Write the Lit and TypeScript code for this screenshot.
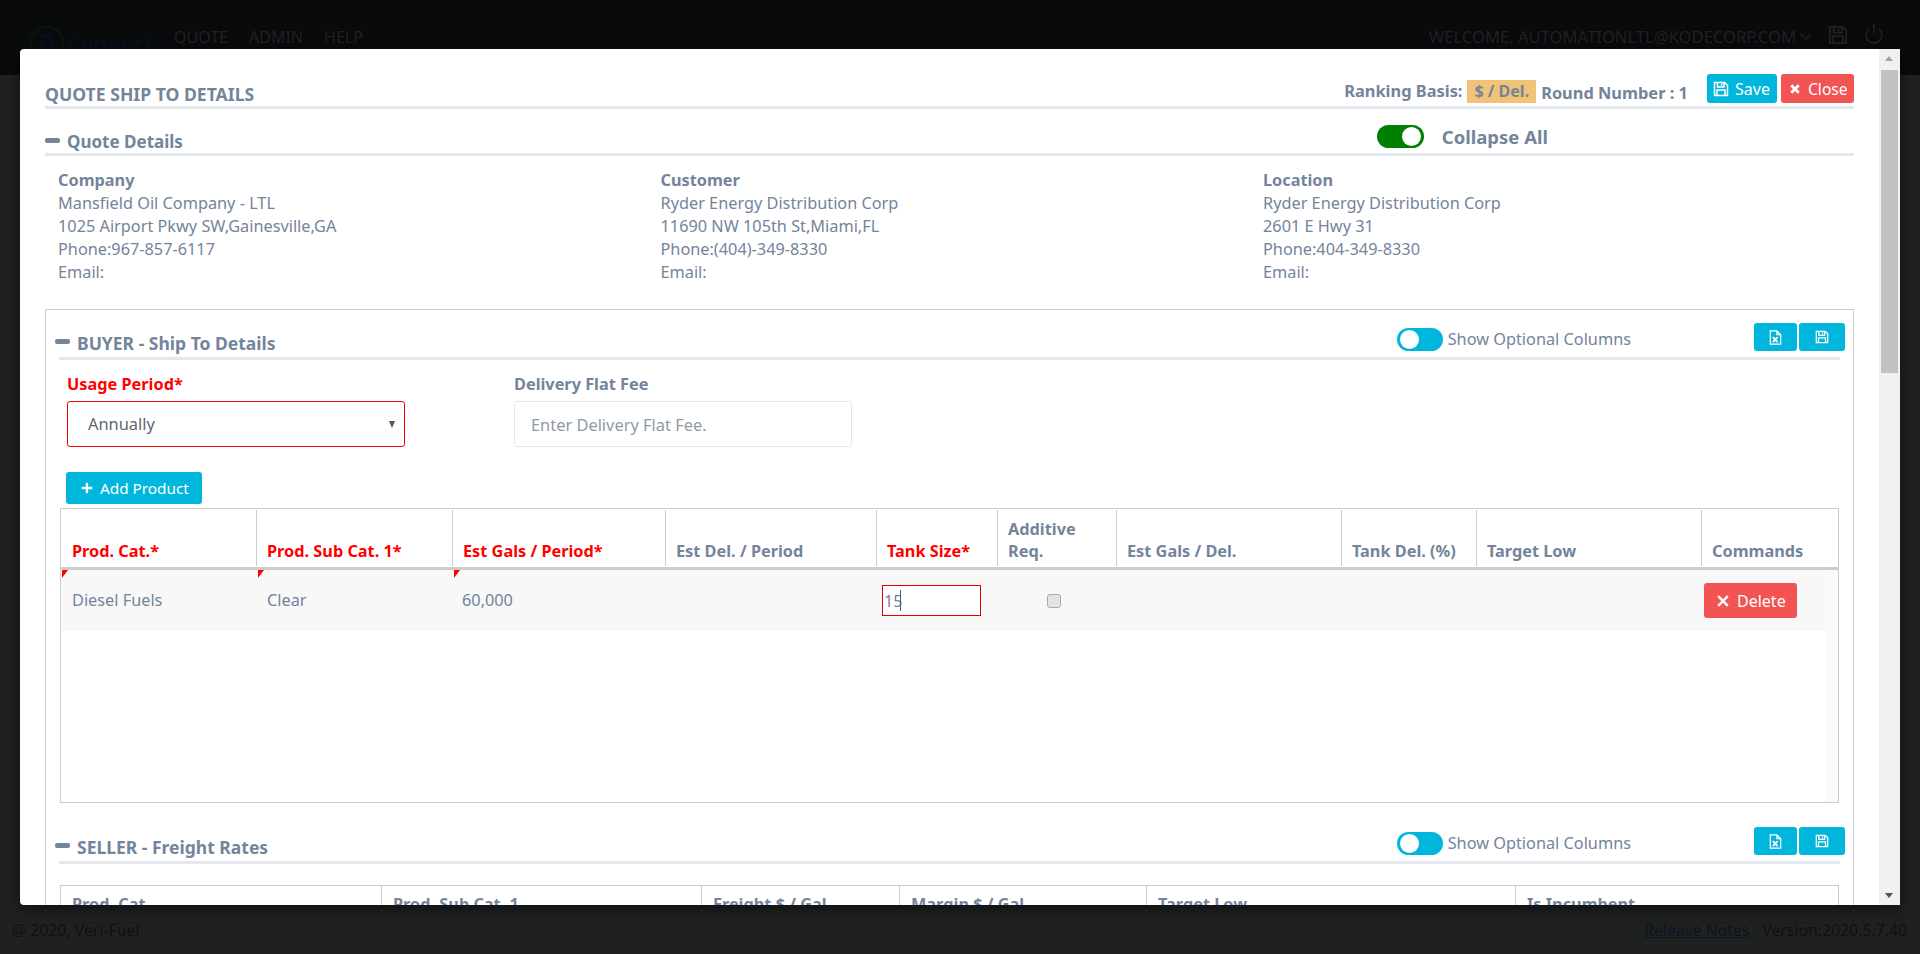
import { LitElement, html, css, svg } from "lit";
import { customElement } from "lit/decorators.js";

const floppy = svg`<path d="M1.5 1.5h10.2l2.8 2.8v10.2h-13z M4.5 1.5v4.6h6.5v-4.6 M8.6 2.8v2 M4 14.5v-5.6h8v5.6" fill="none" stroke="currentColor" stroke-width="1.5"/>`;
const excel = svg`<path d="M2.5 1h7l4 4v10h-11z M9.5 1v4h4" fill="none" stroke="currentColor" stroke-width="1.4"/><path d="M5.2 7.5l5 5.5M10.2 7.5l-5 5.5" fill="none" stroke="currentColor" stroke-width="1.9"/>`;
const cross = svg`<path d="M3 3l10 10M13 3L3 13" fill="none" stroke="currentColor" stroke-width="3.8"/>`;
const thinCross = svg`<path d="M2.5 2.5l11 11M13.5 2.5l-11 11" fill="none" stroke="currentColor" stroke-width="2.8"/>`;
const plus = svg`<path d="M8 2v12M2 8h12" fill="none" stroke="currentColor" stroke-width="2.6"/>`;
const power = svg`<path d="M5.2 4.6a8 8 0 1 0 9.6 0" fill="none" stroke="currentColor" stroke-width="1.6"/><path d="M10 0v9" fill="none" stroke="currentColor" stroke-width="1.6"/>`;
const chevron = svg`<path d="M2 4.5l6 6 6-6" fill="none" stroke="currentColor" stroke-width="1.8"/>`;

const icon = (body: unknown, size = 16, box = 16) =>
  html`<svg class="ico" width=${size} height=${size} viewBox="0 0 ${box} ${box}">${body}</svg>`;

const addresses = [
  ["Company", "Mansfield Oil Company - LTL", "1025 Airport Pkwy SW,Gainesville,GA", "Phone:967-857-6117", "Email:"],
  ["Customer", "Ryder Energy Distribution Corp", "11690 NW 105th St,Miami,FL", "Phone:(404)-349-8330", "Email:"],
  ["Location", "Ryder Energy Distribution Corp", "2601 E Hwy 31", "Phone:404-349-8330", "Email:"],
];

const buyerCols = [
  { t: "Prod. Cat.*", req: true },
  { t: "Prod. Sub Cat. 1*", req: true },
  { t: "Est Gals / Period*", req: true },
  { t: "Est Del. / Period" },
  { t: "Tank Size*", req: true },
  { t: "Additive Req.", wrap: true },
  { t: "Est Gals / Del." },
  { t: "Tank Del. (%)" },
  { t: "Target Low" },
  { t: "Commands" },
];

const sellerCols = ["Prod. Cat.", "Prod. Sub Cat. 1", "Freight $ / Gal", "Margin $ / Gal", "Target Low", "Is Incumbent"];

@customElement("app-root")
export class AppRoot extends LitElement {
  static styles = css`
    :host {
      display: flex;
      flex-direction: column;
      position: relative;
      width: 1920px;
      height: 954px;
      overflow: hidden;
      background: #1f2120;
      font-family: "Noto Sans", "Open Sans", sans-serif;
      font-size: 16.3px;
      color: #73849b;
    }
    * { box-sizing: border-box; }
    .ico { display: block; flex: none; }

    .topbar {
      height: 75px;
      background: #090a0c;
      color: #1f2123;
      display: flex;
      align-items: flex-start;
      padding: 25px 36px 0 30px;
      font-size: 16px;
      line-height: 24px;
    }
    .logo { display: flex; align-items: center; width: 144px; color: #05101c; font-weight: 700; font-size: 21px; line-height: 34px; margin-top: 1px; }
    .logo-mark { width: 34px; height: 34px; border: 2px solid #051a0c; border-radius: 50%; text-align: center; line-height: 28px; margin-right: 3px; }
    .nav { display: flex; gap: 21px; }
    .account { margin-left: auto; display: flex; align-items: center; font-size: 16.6px; }
    .account .save { margin-left: 15px; margin-top: -4px; }
    .account .off { margin-left: 16px; margin-top: -6px; }
    .account .chev { margin-left: 3px; }

    .spacer { flex: 1; }
    .footer {
      height: 49px;
      color: #0f1112;
      display: flex;
      align-items: center;
      justify-content: space-between;
      padding: 0 13px 0 12px;
      font-size: 15.8px;
    }
    .footer a { color: #0b1520; text-decoration: underline; margin-right: 13px; }

    .modal {
      position: absolute;
      left: 20px;
      top: 49px;
      width: 1880px;
      height: 856px;
      background: #fff;
      border-radius: 4px 0 0 4px;
      overflow: hidden;
      padding: 0 46px 0 25px;
      box-shadow: 0 4px 14px rgba(0, 0, 0, 0.5);
    }
    .sb { position: absolute; right: 0; top: 0; bottom: 0; width: 21px; background: #f1f1f1; }
    .sb-thumb { position: absolute; left: 2px; right: 2px; top: 21px; height: 303px; background: #c1c1c1; }
    .sb-up, .sb-down { position: absolute; left: 6px; width: 0; height: 0; border-left: 4.5px solid transparent; border-right: 4.5px solid transparent; }
    .sb-up { top: 7px; border-bottom: 5px solid #a3a3a3; }
    .sb-down { bottom: 7px; border-top: 5px solid #505050; }

    .head { display: flex; align-items: flex-end; border-bottom: 3px solid #e4e7ed; font-weight: 700; }
    .title { height: 60px; font-size: 17.6px; line-height: 22px; padding-bottom: 3px; }
    .title-text { margin-right: auto; margin-bottom: -2px; }
    .rank { display: flex; align-items: flex-end; font-size: 16.4px; }
    .rank-label { line-height: 22px; margin-bottom: 1px; }
    .rank-badge { background: #f0c376; height: 23px; line-height: 22px; padding: 0 7px; margin-left: 5px; margin-right: 5px; font-size: 16px; }
    .round { line-height: 22px; margin-right: 19px; margin-bottom: -1px; }
    .btn { display: inline-flex; align-items: center; border-radius: 3px; color: #fff; border: 0; font-family: inherit; padding: 0; font-weight: 400; }
    .btn.info { background: #00b6dd; }
    .btn.danger { background: #f25353; }
    .btn-save { width: 70px; height: 29px; padding-left: 6px; gap: 6px; margin-right: 4px; font-size: 16px; }
    .btn-close { width: 73px; height: 29px; padding-left: 8px; gap: 7px; font-size: 15.6px; }

    .minus { width: 15px; height: 5px; border-radius: 2px; background: #73849b; flex: none; margin-right: 7px; }
    .sub { height: 47px; font-size: 17px; line-height: 22px; }
    .sub .minus { margin-bottom: 10px; }
    .toggle { position: relative; flex: none; border-radius: 12px; background: #00b6dd; }
    .toggle i { position: absolute; top: 2px; width: 19px; height: 19px; border-radius: 50%; background: #fff; }
    .toggle.green { background: #008000; width: 47px; height: 23px; }
    .toggle.green i { right: 3px; }
    .toggle.blue { width: 46px; height: 23px; }
    .toggle.blue i { left: 3px; }
    .collapse { display: flex; align-items: center; margin-left: auto; margin-right: 306px; margin-bottom: 5px; gap: 18px; font-size: 18.5px; }

    .addr { display: grid; grid-template-columns: repeat(3, 602.5px); padding: 13px 0 0 13px; line-height: 23px; }
    .addr b { display: block; }
    .addr span { display: block; }

    .box { margin-top: 25px; height: 700px; border: 1px solid #ccc; }
    .sec { height: 50px; margin: 0 13px; }
    .sec .minus { margin-left: -4px; margin-bottom: 13px; }
    .sec-title { font-size: 17.5px; line-height: 22px; margin-bottom: 3px; }
    .opts { display: flex; align-items: flex-end; margin-left: auto; margin-right: -5px; font-weight: 400; }
    .opts-label { margin-left: 5px; line-height: 22px; margin-bottom: 7px; margin-right: 123px; }
    .opts .toggle { margin-bottom: 6px; }
    .btn-icon { width: 43px; height: 28px; justify-content: center; margin-bottom: 6px; }
    .btn-icon.wide { width: 46px; margin-left: 2px; }

    .form { display: grid; grid-template-columns: 447px 338px; padding: 14px 0 0 21px; }
    .form label { display: block; font-weight: 700; line-height: 20px; height: 27px; }
    .form label.req { color: #f00; }
    .select { position: relative; width: 338px; }
    .select::after {
      content: "";
      position: absolute;
      left: 322px;
      top: 20px;
      border-left: 3.5px solid transparent;
      border-right: 3.5px solid transparent;
      border-top: 7px solid #555;
    }
    .form select, .form input {
      display: block;
      width: 338px;
      height: 46px;
      font-family: inherit;
      font-size: 16.4px;
      background: #fff;
      border-radius: 3px;
    }
    .form select { appearance: none; border: 1px solid #f00; color: #5c6873; padding: 0 0 2px 20px; outline: 0; }
    .form input { border: 1px solid #e4e7ea; padding-left: 16px; outline: 0; }
    .form input::placeholder { color: #8f9aa6; opacity: 1; }
    .add { width: 136px; height: 32px; margin: 25px 0 4px 20px; padding-left: 14px; gap: 6px; font-size: 15.3px; }

    .grid { margin-left: 14px; width: 1779px; border: 1px solid #ccc; }
    .grid.buyer { height: 295px; position: relative; }
    .cols { display: grid; }
    .buyer .cols { grid-template-columns: 196px 196px 213px 211px 121px 119px 225px 135px 225px 136px; }
    .hdr { height: 61px; padding-top: 1px; border-bottom: 3px solid #ccc; }
    .hdr > div {
      display: flex;
      align-items: flex-end;
      height: 56px;
      border-right: 1px solid #ccc;
      padding: 0 10px 4px 10px;
      font-weight: 700;
      line-height: 22px;
    }
    .hdr > div:first-child { padding-left: 11px; }
    .hdr > div:last-child { border-right: 0; }
    .hdr > div.req { color: #f00; }
    .hdr .wrap { max-width: 80px; }
    .body { position: absolute; left: 0; right: 0; top: 61px; bottom: 0; }
    .gutter { position: absolute; right: 0; top: 0; bottom: 0; width: 12px; background: #f9f9f9; }
    .row { height: 61px; width: 1765px; background: #f8f8f8; align-items: center; }
    .row > div { position: relative; height: 61px; display: flex; align-items: center; padding-left: 10px; }
    .row > div:first-child { padding-left: 11px; }
    .row > div:nth-child(3) { padding-left: 9px; }
    .dirty { padding-bottom: 2px; }
    .dirty::before {
      content: "";
      position: absolute;
      left: 1px;
      top: 0;
      border-top: 8px solid #f00;
      border-right: 6px solid transparent;
    }
    .tank { position: relative; margin-left: -5px; }
    .tank input { width: 99px; height: 31px; border: 1px solid #e00000; padding: 0 0 0 1px; font-family: inherit; font-size: 16px; color: #73849b; outline: 0; display: block; background: #fff; }
    .caret { position: absolute; left: 18px; top: 5px; width: 1px; height: 21px; background: #4a5a70; }
    .check { justify-content: center; padding: 0 8px 0 0 !important; }
    .check input { appearance: none; margin: 0; width: 14px; height: 14px; background: #e4e4e4; border: 1px solid #aaa; border-radius: 3px; }
    .delete { width: 93px; height: 35px; margin-left: -8px; padding-left: 12px; gap: 7px; font-size: 16px; }

    .sec.next { height: 61px; }
    .grid.seller { margin-top: 21px; }
    .seller .cols { grid-template-columns: 321px 320px 198px 247px 369px 322px; }
    .seller .hdr { height: 61px; padding-top: 0; }
    .seller .hdr > div { padding: 7px 10px 0 11px; align-items: flex-start; }
  `;

  section(title: string, cls: string) {
    return html`<div class="head sec ${cls}">
      <span class="minus"></span>
      <span class="sec-title">${title}</span>
      <div class="opts">
        <div class="toggle blue"><i></i></div>
        <span class="opts-label">Show Optional Columns</span>
        <button class="btn info btn-icon">${icon(excel, 15)}</button>
        <button class="btn info btn-icon wide">${icon(floppy, 14)}</button>
      </div>
    </div>`;
  }

  render() {
    return html`
      <div class="topbar">
        <div class="logo"><span class="logo-mark">D</span>Connect</div>
        <div class="nav"><span>QUOTE</span><span>ADMIN</span><span>HELP</span></div>
        <div class="account">
          <span>WELCOME, AUTOMATIONLTL@KODECORP.COM</span>
          <span class="chev">${icon(chevron, 14)}</span>
          <span class="save">${icon(floppy, 20)}</span>
          <span class="off">${icon(power, 20, 20)}</span>
        </div>
      </div>
      <div class="spacer"></div>
      <div class="footer">
        <span>@ 2020, Veri-Fuel</span>
        <span><a>Release Notes</a>Version:2020.5.7.40</span>
      </div>

      <div class="modal">
        <div class="head title">
          <span class="title-text">QUOTE SHIP TO DETAILS</span>
          <div class="rank">
            <span class="rank-label">Ranking Basis:</span>
            <span class="rank-badge">$ / Del.</span>
            <span class="round">Round Number : 1</span>
          </div>
          <button class="btn info btn-save">${icon(floppy, 16)}Save</button>
          <button class="btn danger btn-close">${icon(cross, 12)}Close</button>
        </div>

        <div class="head sub">
          <span class="minus"></span>
          <span>Quote Details</span>
          <div class="collapse">
            <div class="toggle green"><i></i></div>
            <span>Collapse All</span>
          </div>
        </div>

        <div class="addr">
          ${addresses.map(
            ([h, ...lines]) => html`<div><b>${h}</b>${lines.map((l) => html`<span>${l}</span>`)}</div>`
          )}
        </div>

        <div class="box">
          ${this.section("BUYER - Ship To Details", "first")}
          <div class="form">
            <div>
              <label class="req">Usage Period*</label>
              <div class="select"><select><option>Annually</option></select></div>
            </div>
            <div>
              <label>Delivery Flat Fee</label>
              <input placeholder="Enter Delivery Flat Fee." />
            </div>
          </div>
          <button class="btn info add">${icon(plus, 14)}Add Product</button>

          <div class="grid buyer">
            <div class="cols hdr">
              ${buyerCols.map(
                (c) => html`<div class=${c.req ? "req" : ""}><span class=${c.wrap ? "wrap" : ""}>${c.t}</span></div>`
              )}
            </div>
            <div class="body">
              <div class="gutter"></div>
              <div class="cols row">
                <div class="dirty">Diesel Fuels</div>
                <div class="dirty">Clear</div>
                <div class="dirty">60,000</div>
                <div></div>
                <div><div class="tank"><input value="15" /><span class="caret"></span></div></div>
                <div class="check"><input type="checkbox" /></div>
                <div></div>
                <div></div>
                <div></div>
                <div><button class="btn danger delete">${icon(thinCross, 14)}Delete</button></div>
              </div>
            </div>
          </div>

          ${this.section("SELLER - Freight Rates", "next")}
          <div class="grid seller">
            <div class="cols hdr">${sellerCols.map((c) => html`<div><span>${c}</span></div>`)}</div>
          </div>
        </div>

        <div class="sb">
          <span class="sb-up"></span>
          <div class="sb-thumb"></div>
          <span class="sb-down"></span>
        </div>
      </div>
    `;
  }
}
